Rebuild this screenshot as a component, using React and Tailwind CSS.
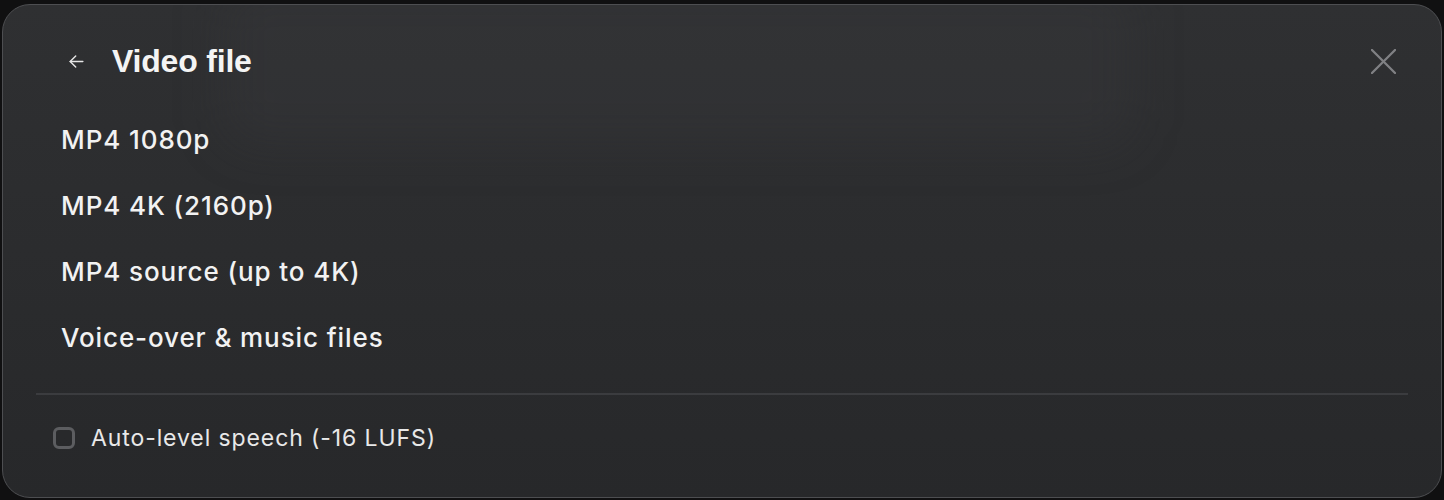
import React from 'react';

const items = ['MP4 1080p', 'MP4 4K (2160p)', 'MP4 source (up to 4K)', 'Voice-over & music files'];

export default function App() {
    return (
        <div className="w-[1444px] h-[500px] bg-[#101011] pt-[4px] pb-[2px] px-[2px] flex">
            <div className="relative flex-1 rounded-[28px] border border-[#4d4e51] bg-gradient-to-b from-[#2f3032] to-[#27282a] overflow-hidden flex flex-col">
                {/* Blurred content behind the sheet */}
                <div className="absolute left-[220px] top-[-20px] w-[910px] h-[160px] bg-[#3a3d40]/25 rounded-[30px] blur-xl pointer-events-none" />

                <div className="relative flex flex-col px-[33px] pt-[28px]">
                    {/* Header */}
                    <div className="flex items-center h-[56px]">
                        <button className="w-[44px] h-[44px] ml-[18px] flex items-center justify-center text-[#e6e6e6]">
                            <svg width="19" height="19" viewBox="0 0 24 24" fill="none" stroke="currentColor" strokeWidth="1.8" strokeLinecap="round" strokeLinejoin="round">
                                <path d="M20 12H4" />
                                <path d="M11 5l-7 7 7 7" />
                            </svg>
                        </button>
                        <h2 className="ml-[14px] text-[32px] font-semibold text-[#f4f4f4] tracking-[-0.2px]" style={{ fontFamily: '"Liberation Sans", Arial, sans-serif' }}>
                            Video file
                        </h2>
                        <button className="ml-auto mr-[11px] w-[28px] h-[28px] flex items-center justify-center text-[#808184]">
                            <svg width="25" height="25" viewBox="0 0 26 26" fill="none" stroke="currentColor" strokeWidth="2.4" strokeLinecap="round">
                                <path d="M1 1l24 24" />
                                <path d="M25 1L1 25" />
                            </svg>
                        </button>
                    </div>

                    {/* Options */}
                    <ul className="mt-[17px] flex flex-col" style={{ fontFamily: 'Inter, "Noto Sans", sans-serif' }}>
                        {items.map((label) => (
                            <li key={label} className="h-[66px] flex items-center pl-[25px] text-[26px] font-medium text-[#f2f2f2] tracking-[0.9px]">
                                {label}
                            </li>
                        ))}
                    </ul>

                    <div className="mt-[23px] h-[2px] bg-[#3b3c3f]" />

                    {/* Footer toggle */}
                    <label className="mt-[21px] h-[44px] flex items-center gap-[16px] pl-[17px]" style={{ fontFamily: 'Inter, "Noto Sans", sans-serif' }}>
                        <span className="w-[22px] h-[22px] rounded-[6px] border-[3px] border-[#5c5d60]" />
                        <span className="text-[23px] text-[#e8e8e8] tracking-[0.9px]">Auto-level speech (-16 LUFS)</span>
                    </label>
                </div>
            </div>
        </div>
    );
}
